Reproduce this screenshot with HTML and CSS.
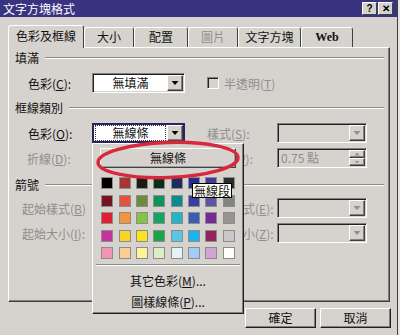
FILE: index.html
```html
<!DOCTYPE html>
<html lang="zh-Hant">
<head>
    <meta charset="UTF-8">
    <meta name="viewport" content="width=device-width, initial-scale=1.0">
    <title>文字方塊格式</title>
    <link rel="stylesheet" href="styles.css">
</head>
<body>
    <!-- Dialog Window -->
    <div class="window">
        <div class="titlebar">
            <span class="title">文字方塊格式</span>
            <div class="title-buttons">
                <span class="tbtn">?</span>
                <span class="tbtn">✕</span>
            </div>
        </div>

        <!-- Tabs -->
        <div class="tabs">
            <div class="tab active tab-color">色彩及框線</div>
            <div class="tab tab-size">大小</div>
            <div class="tab tab-layout">配置</div>
            <div class="tab tab-picture dim">圖片</div>
            <div class="tab tab-textbox">文字方塊</div>
            <div class="tab tab-web">Web</div>
        </div>

        <!-- Tab Panel -->
        <div class="panel">
            <div class="section-title first"><span>填滿</span><i class="rule"></i></div>
            <div class="row row-fill">
                <span class="lbl">色彩(<u>C</u>):</span>
                <div class="combo"><span class="field">無填滿</span><span class="drop"><i class="arrow"></i></span></div>
                <span></span>
                <div class="check-wrap">
                    <span class="checkbox"></span>
                    <span class="dim">半透明(<u>T</u>)</span>
                </div>
            </div>

            <div class="section-title"><span>框線類別</span><i class="rule"></i></div>
            <div class="row row-line">
                <span class="lbl">色彩(<u>O</u>):</span>
                <div class="combo focus"><span class="field"><span class="focus-box">無線條</span></span><span class="drop"><i class="arrow"></i></span></div>
                <span></span>
                <span class="lbl-r dim">樣式(<u>S</u>):</span>
                <div class="combo off"><span class="field"></span><span class="drop"><i class="arrow"></i></span></div>
            </div>
            <div class="row row-dash">
                <span class="lbl dim">折線(<u>D</u>):</span>
                <div class="combo off"><span class="field"></span><span class="drop"><i class="arrow"></i></span></div>
                <span></span>
                <span class="lbl-r dim">粗細(<u>W</u>):</span>
                <div class="spin">
                    <span class="field dim">0.75 點</span>
                    <span class="spin-btns">
                        <span class="sbtn"><i class="arrow up"></i></span>
                        <span class="sbtn"><i class="arrow"></i></span>
                    </span>
                </div>
            </div>

            <div class="section-title arrows"><span>箭號</span><i class="rule"></i></div>
            <div class="row row-begin">
                <span class="lbl dim">起始樣式(<u>B</u>)</span>
                <div class="combo off"><span class="field"></span><span class="drop"><i class="arrow"></i></span></div>
                <span></span>
                <span class="lbl-r dim">結束樣式(<u>E</u>):</span>
                <div class="combo off"><span class="field"></span><span class="drop"><i class="arrow"></i></span></div>
            </div>
            <div class="row row-size">
                <span class="lbl dim">起始大小(<u>I</u>):</span>
                <div class="combo off"><span class="field"></span><span class="drop"><i class="arrow"></i></span></div>
                <span></span>
                <span class="lbl-r dim">結束大小(<u>Z</u>):</span>
                <div class="combo off"><span class="field"></span><span class="drop"><i class="arrow"></i></span></div>
            </div>
        </div>

        <!-- Buttons -->
        <div class="buttons">
            <span class="btn">確定</span>
            <span class="btn">取消</span>
        </div>

        <!-- Colour Dropdown -->
        <div class="popup">
            <div class="no-line">無線條</div>
            <div class="palette">
                <i style="background:#000000"></i><i style="background:#a83434"></i><i style="background:#1c1c14"></i><i style="background:#0c2c1c"></i><i style="background:#1c2c5c"></i><i style="background:#242c8c"></i><i style="background:#3c3c9c"></i><i style="background:#2c2c2c"></i>
                <i style="background:#741424"></i><i style="background:#e4543c"></i><i style="background:#6c8c3c"></i><i style="background:#0c945c"></i><i style="background:#0c8c8c"></i><i style="background:#3c3ca4"></i><i style="background:#5c54a4"></i><i style="background:#848484"></i>
                <i style="background:#e41c34"></i><i style="background:#f4943c"></i><i style="background:#84c444"></i><i style="background:#14a464"></i><i style="background:#24b4c8"></i><i style="background:#3c5cb4"></i><i style="background:#742c94"></i><i style="background:#949494"></i>
                <i style="background:#c4349c"></i><i style="background:#f8d424"></i><i style="background:#f8e41c"></i><i style="background:#1ca44c"></i><i style="background:#5cc4e4"></i><i style="background:#1cb4ec"></i><i style="background:#94245c"></i><i style="background:#c8c8c8"></i>
                <i style="background:#f494b4"></i><i style="background:#fccc94"></i><i style="background:#fcf494"></i><i style="background:#dcecc4"></i><i style="background:#e4f4f4"></i><i style="background:#a4ccf4"></i><i style="background:#d4a4d4"></i><i style="background:#ffffff"></i>
            </div>
            <div class="sep"></div>
            <div class="item">其它色彩(<u>M</u>)...</div>
            <div class="item">圖樣線條(<u>P</u>)...</div>
        </div>

        <div class="tooltip">無線段</div>

        <!-- Red hand-drawn circle -->
        <svg class="mark" width="400" height="335" viewBox="0 0 400 335">
            <ellipse cx="168" cy="160" rx="70" ry="17.5" transform="rotate(-2 168 160)" fill="none" stroke="#d8283c" stroke-width="3.5"/>
        </svg>
    </div>
</body>
</html>
```

FILE: styles.css
```css
/* Global */
body {
    margin: 0;
    background: #e6e4e0;
    font-family: "Noto Sans CJK TC", "Noto Sans", sans-serif;
    font-size: 12px;
    color: #111;
}

u {
    text-decoration: underline;
    text-underline-offset: 1px;
}

.dim {
    color: #8e8e8e;
}

/* Window */
.window {
    position: relative;
    width: 397px;
    height: 335px;
    background: #d6d3ce;
    border-right: 1px solid #404040;
    overflow: hidden;
}

.titlebar {
    height: 17px;
    background: #3a3380;
    color: #fff;
    display: flex;
    align-items: center;
    justify-content: space-between;
    padding: 0 4px 0 3px;
}
.title {
    line-height: 17px;
}
.title-buttons {
    display: flex;
    gap: 1px;
}
.tbtn {
    width: 15px;
    height: 13px;
    box-sizing: border-box;
    background: #d6d3ce;
    border: 1px solid;
    border-color: #fff #404040 #404040 #fff;
    color: #000;
    font: bold 10px/11px "Liberation Sans", sans-serif;
    text-align: center;
}

/* Tabs */
.tabs {
    display: flex;
    align-items: flex-end;
    height: 22px;
    margin-top: 8px;
    padding-left: 8px;
}
.tab {
    height: 20px;
    box-sizing: border-box;
    border: 1px solid;
    border-bottom: none;
    border-color: #fff #404040 transparent #fff;
    border-radius: 3px 3px 0 0;
    text-align: center;
    line-height: 18px;
}
.tab.active {
    height: 23px;
    margin-bottom: -1px;
    line-height: 20px;
    position: relative;
    z-index: 1;
    background: #d6d3ce;
}
.tab-color { width: 76px; }
.tab-size { width: 50px; }
.tab-layout { width: 54px; }
.tab-picture { width: 50px; }
.tab-textbox { width: 63px; }
.tab-web {
    width: 52px;
    font-family: "Liberation Serif", serif;
    font-weight: bold;
}

/* Panel */
.panel {
    margin-left: 8px;
    width: 382px;
    height: 255px;
    box-sizing: border-box;
    border: 1px solid;
    border-color: #fff #404040 #404040 #fff;
    box-shadow: inset -1px -1px #808080;
    padding-top: 3px;
}

.section-title {
    display: flex;
    align-items: center;
    gap: 6px;
    height: 14px;
    line-height: 14px;
    padding-left: 6px;
    margin: 8px 5px 0 0;
}
.section-title.first { margin-top: 0; }
.section-title.arrows { margin-top: 10px; }
.rule {
    flex: 1;
    border-top: 1px solid #8a8a8a;
    border-bottom: 1px solid #fff;
}

.row {
    display: grid;
    grid-template-columns: 83px 93px 22px 70px 90px;
    align-items: center;
    height: 20px;
    margin-top: 8px;
}
.row-dash, .row-size { margin-top: 5px; }
.row-begin { margin-top: 6px; }

.lbl {
    padding-left: 19px;
    white-space: nowrap;
}
.row-dash .lbl { padding-left: 18px; }
.row-begin .lbl, .row-size .lbl { padding-left: 13px; }
.lbl-r { white-space: nowrap; }

/* Combo boxes */
.combo, .spin {
    height: 20px;
    box-sizing: border-box;
    display: flex;
    border: 1px solid;
    border-color: #808080 #fff #fff #808080;
    box-shadow: inset 1px 1px #202020, inset -1px -1px #d6d3ce;
    padding: 1px;
    background: #fff;
}
.combo.off, .spin {
    background: #d6d3ce;
}
.field {
    flex: 1;
    text-align: center;
    line-height: 16px;
}
.combo.focus {
    border-color: #2a2560;
    box-shadow: inset 1px 1px #2a2560, inset -1px -1px #2a2560;
}
.focus-box {
    display: block;
    margin: 1px 2px;
    line-height: 14px;
    outline: 1px dotted #333;
}
.drop, .sbtn {
    width: 16px;
    box-sizing: border-box;
    background: #d6d3ce;
    border: 1px solid;
    border-color: #fff #404040 #404040 #fff;
    box-shadow: inset -1px -1px #808080;
    display: flex;
    align-items: center;
    justify-content: center;
}
.arrow {
    width: 7px;
    height: 4px;
    background: #000;
    clip-path: polygon(0 0, 100% 0, 50% 100%);
}
.arrow.up {
    clip-path: polygon(50% 0, 100% 100%, 0 100%);
}
.off .arrow, .spin .arrow {
    background: #909090;
}
.spin .field {
    text-align: left;
    padding-left: 2px;
}
.spin-btns {
    display: flex;
    flex-direction: column;
}
.sbtn {
    height: 8px;
}
.spin .arrow {
    width: 5px;
    height: 3px;
}

/* Checkbox */
.check-wrap {
    grid-column: 4 / 6;
    display: flex;
    align-items: center;
    gap: 5px;
}
.checkbox {
    width: 12px;
    height: 12px;
    box-sizing: border-box;
    border: 1px solid;
    border-color: #808080 #fff #fff #808080;
    box-shadow: inset 1px 1px #202020;
}

/* Bottom buttons */
.buttons {
    display: flex;
    justify-content: flex-end;
    gap: 4px;
    padding-right: 6px;
    margin-top: 6px;
}
.btn {
    width: 71px;
    height: 20px;
    box-sizing: border-box;
    border: 1px solid;
    border-color: #fff #202020 #202020 #fff;
    box-shadow: inset -1px -1px #808080;
    text-align: center;
    line-height: 18px;
}

/* Colour dropdown */
.popup {
    position: absolute;
    left: 92px;
    top: 143px;
    width: 152px;
    height: 171px;
    box-sizing: border-box;
    background: #d6d3ce;
    border: 1px solid;
    border-color: #fff #202020 #202020 #fff;
    box-shadow: inset -1px -1px #808080;
    display: flex;
    flex-direction: column;
    align-items: center;
    z-index: 2;
}
.no-line {
    width: 136px;
    height: 20px;
    margin-top: 4px;
    box-sizing: border-box;
    border: 1px solid;
    border-color: #fff #404040 #404040 #fff;
    box-shadow: inset -1px -1px #a0a0a0;
    text-align: center;
    line-height: 18px;
}
.palette {
    display: grid;
    grid-template-columns: repeat(8, 12px);
    column-gap: 5.3px;
    row-gap: 5.5px;
    margin-top: 9px;
}
.palette i {
    width: 12px;
    height: 12px;
    box-sizing: border-box;
    border: 1px solid #8c8c8c;
}
.sep {
    width: 144px;
    margin-top: 5px;
    border-top: 1px solid #8a8a8a;
    border-bottom: 1px solid #fff;
}
.item {
    height: 21px;
    line-height: 21px;
    text-align: center;
}
.sep + .item { margin-top: 4px; }

.tooltip {
    position: absolute;
    left: 192px;
    top: 183px;
    height: 15px;
    box-sizing: border-box;
    padding: 0 1px;
    border: 1px solid #000;
    background: #fffff6;
    line-height: 13px;
    z-index: 3;
}

.mark {
    position: absolute;
    left: 0;
    top: 0;
    z-index: 4;
    pointer-events: none;
}
```
